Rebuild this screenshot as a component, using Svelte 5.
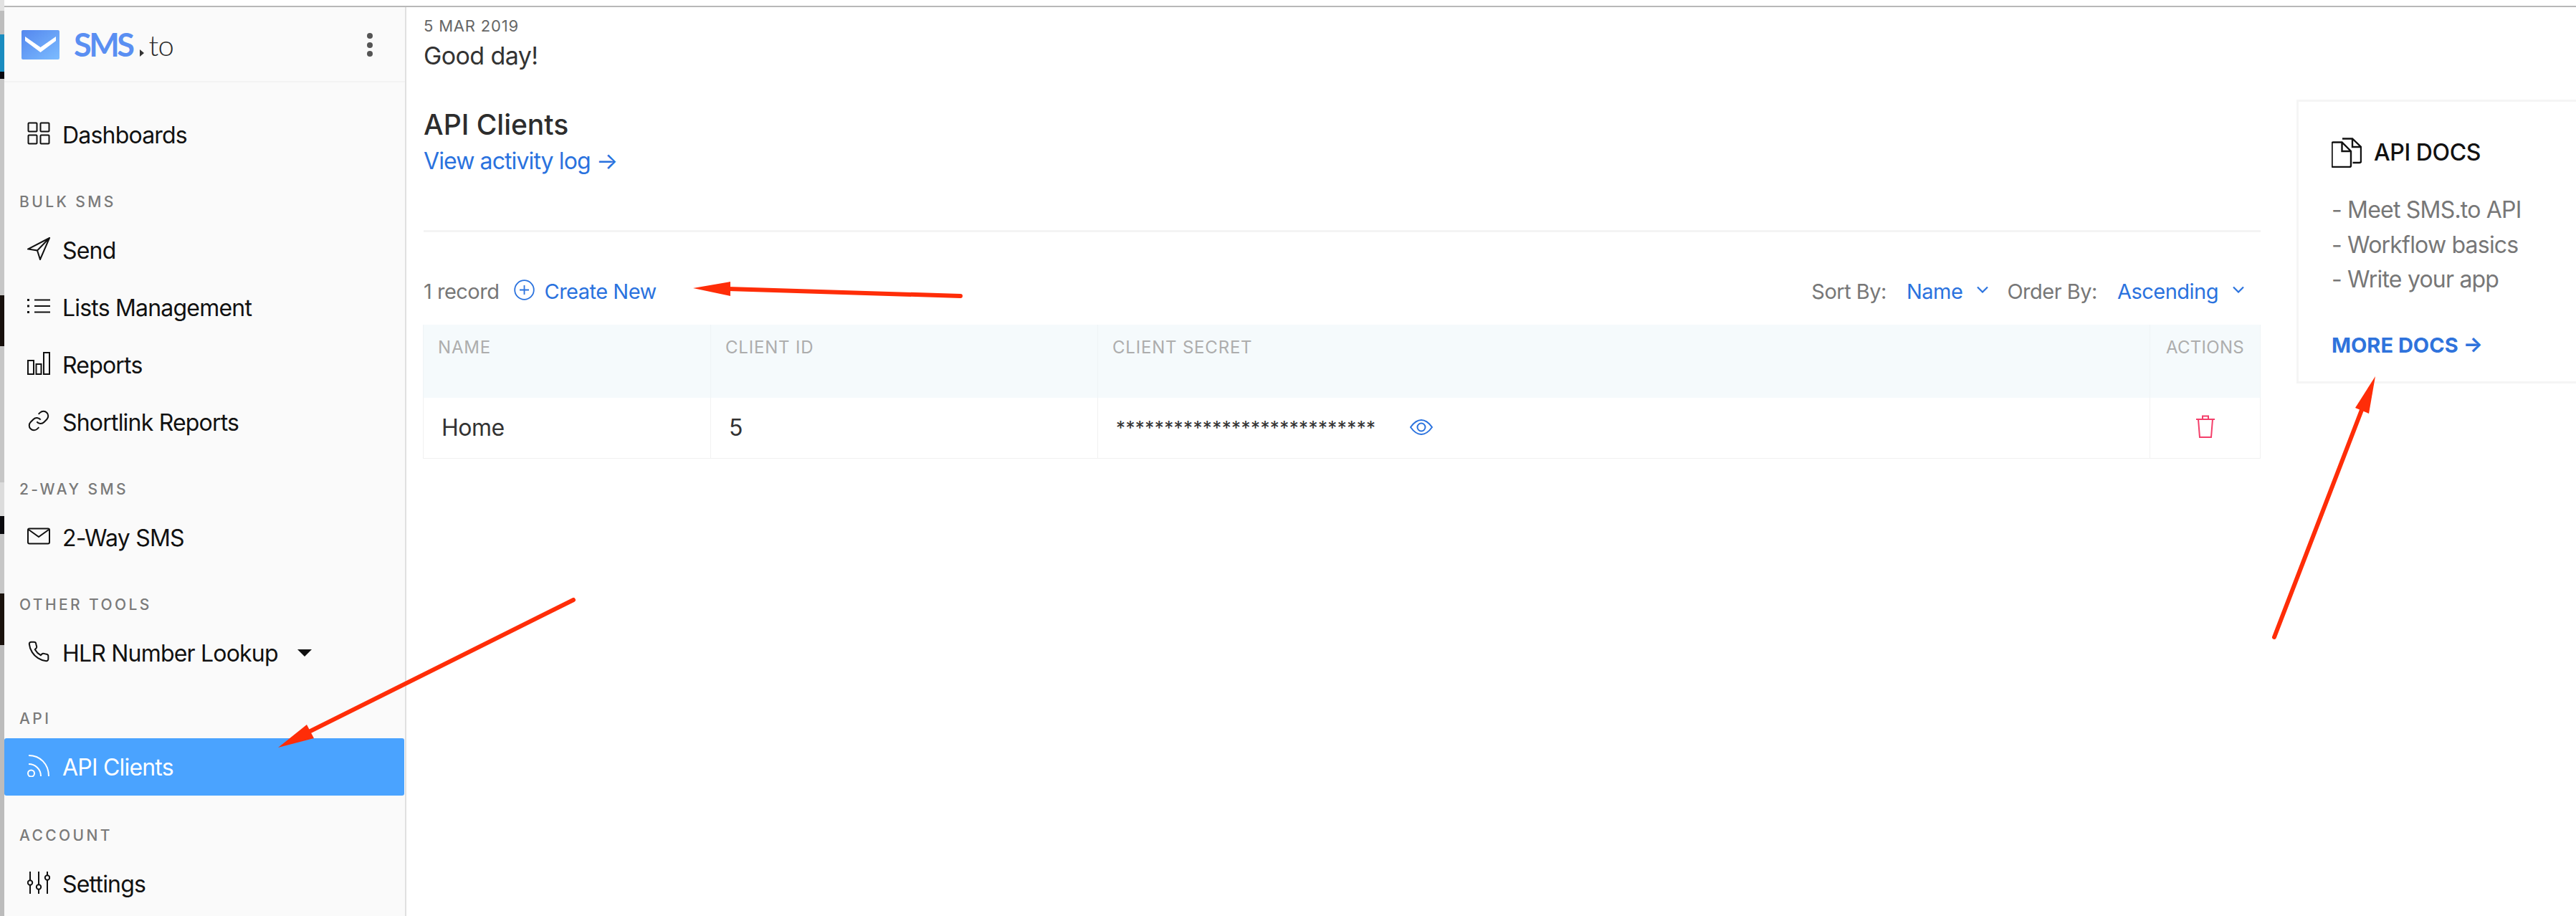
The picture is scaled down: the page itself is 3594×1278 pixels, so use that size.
<script>
  // slice of the desktop that shows at the left edge of the window
  const strip = [
    [15, '#e2e2e2'], [33, '#bdbdbd'], [52, '#1a8cc0'], [10, '#08080f'],
    [302, '#c6c6c6'], [71, '#17100c'], [190, '#c6c6c6'], [47, '#dcdcdc'],
    [25, '#0a0a0e'], [83, '#c6c6c6'], [72, '#1a120c'], [378, '#bcbcbc']
  ];
  const secret = '*'.repeat(27);
</script>

<div class="page">
  <div class="strip">
    {#each strip as [h, bg]}
      <div style="height:{h}px;background:{bg}"></div>
    {/each}
  </div>

  <div class="window">
    <div class="topbar"></div>
    <div class="body">
      <nav class="sidebar">
        <div class="brand">
          <svg class="logo" viewBox="0 0 53 41" width="53" height="41">
            <defs>
              <linearGradient id="lg" x1="0" y1="0" x2="1" y2="1">
                <stop offset="0" stop-color="#5487ee" />
                <stop offset="1" stop-color="#7cbcff" />
              </linearGradient>
            </defs>
            <rect width="53" height="41" rx="2" fill="url(#lg)" />
            <path d="M5 9 L26.500 24 L48 9 V15 L26.500 31 L5 15 Z" fill="#fff" />
          </svg>
          <span class="sms">SMS</span>
          <span class="dot"></span>
          <span class="to">to</span>
          <span class="kebab"><i></i><i></i><i></i></span>
        </div>

        <a class="item first">
          <svg viewBox="0 0 32 32"><rect x="1.500" y="1.500" width="12" height="12" rx="1" /><rect x="18.500" y="1.500" width="12" height="12" rx="1" /><rect x="1.500" y="18.500" width="12" height="12" rx="1" /><rect x="18.500" y="18.500" width="12" height="12" rx="1" /></svg>
          Dashboards
        </a>

        <div class="label">BULK SMS</div>
        <a class="item">
          <svg viewBox="0 0 32 32"><path d="M31 1 L1 16.500 L14 18.500 L18 31 Z M14 18.500 L31 1" /></svg>
          Send
        </a>
        <a class="item">
          <svg viewBox="0 0 32 32"><path d="M10 7.500 H32 M10 16 H32 M10 24.500 H32" /><path class="thick" d="M0 7.500 H3 M0 16 H3 M0 24.500 H3" /></svg>
          Lists Management
        </a>
        <a class="item">
          <svg viewBox="0 0 32 32"><rect x="1" y="12" width="8" height="19" /><rect x="12.500" y="17" width="7" height="14" /><rect x="23" y="1" width="8" height="30" /></svg>
          Reports
        </a>
        <a class="item">
          <svg viewBox="0 0 24 24" class="fine"><path d="M10 13a5 5 0 0 0 7.540.54l3-3a5 5 0 0 0-7.070-7.070l-1.720 1.710" /><path d="M14 11a5 5 0 0 0-7.540-.54l-3 3a5 5 0 0 0 7.070 7.070l1.710-1.710" /></svg>
          Shortlink Reports
        </a>

        <div class="label">2-WAY SMS</div>
        <a class="item">
          <svg viewBox="0 0 32 32"><rect x="1" y="5.500" width="30" height="21" rx="2" /><path d="M2 7 L16 17 L30 7" /></svg>
          2-Way SMS
        </a>

        <div class="label">OTHER TOOLS</div>
        <a class="item">
          <svg viewBox="0 0 24 24" class="fine"><path d="M22 16.920v3a2 2 0 0 1-2.180 2 19.790 19.790 0 0 1-8.630-3.070 19.500 19.500 0 0 1-6-6 19.790 19.790 0 0 1-3.070-8.670A2 2 0 0 1 4.110 2h3a2 2 0 0 1 2 1.720 12.840 12.840 0 0 0 .7 2.810 2 2 0 0 1-.45 2.110L8.090 9.910a16 16 0 0 0 6 6l1.270-1.270a2 2 0 0 1 2.110-.45 12.840 12.840 0 0 0 2.810.7A2 2 0 0 1 22 16.920z" /></svg>
          HLR Number Lookup
          <span class="caret"></span>
        </a>

        <div class="label tight">API</div>
        <a class="item active">
          <svg viewBox="0 0 32 32"><circle cx="5.500" cy="27" r="4.500" /><path d="M2 14 C11 14 19 21 19 31 M2 2 C18 2 30 14 30 31" /></svg>
          API Clients
        </a>

        <div class="label last">ACCOUNT</div>
        <a class="item">
          <svg viewBox="0 0 32 32"><path d="M4 1 V13 M4 20 V32 M16 1 V19 M16 26 V32 M28 1 V6 M28 13 V32" /><circle cx="4" cy="16.500" r="3.200" /><circle cx="16" cy="22.500" r="3.200" /><circle cx="28" cy="9.500" r="3.200" /></svg>
          Settings
        </a>
      </nav>

      <main class="main">
        <section class="content">
          <div class="date">5 MAR 2019</div>
          <div class="greeting">Good day!</div>
          <h1>API Clients</h1>
          <a class="log">View activity log →</a>
          <div class="divider"></div>

          <div class="toolbar">
            <span class="muted">1 record</span>
            <svg class="plus" viewBox="0 0 29 29"><circle cx="14.500" cy="14.500" r="13.300" /><path d="M14.500 8 V21 M8 14.500 H21" /></svg>
            <a class="blue create">Create New</a>
            <span class="spacer"></span>
            <span class="muted">Sort By:</span>
            <a class="blue pick">Name</a>
            <svg class="chev" viewBox="0 0 16 10"><path d="M1 1.500 L8 8.500 L15 1.500" /></svg>
            <span class="muted order">Order By:</span>
            <a class="blue pick">Ascending</a>
            <svg class="chev" viewBox="0 0 16 10"><path d="M1 1.500 L8 8.500 L15 1.500" /></svg>
          </div>

          <table>
            <colgroup>
              <col style="width:401px" /><col style="width:540px" /><col style="width:1468px" /><col style="width:154px" />
            </colgroup>
            <thead>
              <tr>
                <th>NAME</th>
                <th>CLIENT ID</th>
                <th>CLIENT SECRET</th>
                <th class="center">ACTIONS</th>
              </tr>
            </thead>
            <tbody>
              <tr>
                <td>Home</td>
                <td>5</td>
                <td>
                  <div class="secret">
                    <span class="stars">{secret}</span>
                    <svg class="eye" viewBox="0 0 32 22"><path d="M1 11 C6 4 11 1 16 1 C21 1 26 4 31 11 C26 18 21 21 16 21 C11 21 6 18 1 11 Z" /><circle cx="16" cy="11" r="5.500" /></svg>
                  </div>
                </td>
                <td class="center">
                  <svg class="trash" viewBox="0 0 26 32"><path d="M0 6 H26 M9 6 V1.500 H17 V6 M3 6 L5 31 H21 L23 6" /></svg>
                </td>
              </tr>
            </tbody>
          </table>
        </section>

        <aside class="docs">
          <div class="docs-title">
            <svg viewBox="0 0 42 42"><path d="M2 6.500 H14.500 L27 19 V39 a2 2 0 0 1-2 2 H2 a1.500 1.500 0 0 1-1.500-1.500 V8 a1.500 1.500 0 0 1 1.500-1.500 Z M14.500 6.500 V19 H27" /><path d="M15 1.500 H29 L41 13 V33 a2 2 0 0 1-2 2 H29.500 M29 1.500 V13 H41" /></svg>
            API DOCS
          </div>
          <ul>
            <li>- Meet SMS.to API</li>
            <li>- Workflow basics</li>
            <li>- Write your app</li>
          </ul>
          <a class="more">MORE DOCS →</a>
        </aside>
      </main>
    </div>
  </div>

  <!-- red annotations drawn on top of the screenshot -->
  <svg class="notes" viewBox="0 0 3594 1278" width="3594" height="1278">
    <path d="M1340 413 L1015 403" />
    <polygon points="967,402 1019,393 1019,413" />
    <path d="M800 837 L425 1024" />
    <polygon points="388,1043 428,1011 438,1030" />
    <path d="M3173 889 L3295 572" />
    <polygon points="3314,525 3286,569 3305,577" />
  </svg>
</div>

<style>
  :global(body) {
    margin: 0;
    background: #fff;
    overflow: hidden;
  }

  .page {
    position: relative;
    display: flex;
    width: 3594px;
    height: 1278px;
    overflow: hidden;
    font-family: Inter, "Liberation Sans", sans-serif;
    color: #111;
  }

  .strip {
    width: 6px;
    flex: none;
  }

  .window {
    flex: 1;
    min-width: 0;
  }

  .topbar {
    height: 8px;
    border-bottom: 2px solid #b8b8b8;
  }

  .body {
    display: flex;
    height: 1268px;
  }

  /* sidebar */
  .sidebar {
    width: 559px;
    flex: none;
    background: #fafafa;
    border-right: 2px solid #e0e0e0;
  }

  .brand {
    display: flex;
    align-items: flex-start;
    height: 103px;
    padding: 0 0 0 24px;
    border-bottom: 2px solid #f3f3f3;
    position: relative;
  }

  .logo {
    margin-top: 32px;
    flex: none;
  }

  .sms {
    margin: 24px 0 0 20px;
    font-family: Lato, sans-serif;
    font-weight: 700;
    font-size: 45px;
    line-height: 56px;
    letter-spacing: -3.500px;
    color: #5a8ff2;
  }

  .dot {
    margin: 59px 0 0 11px;
    border-left: 6px solid #333;
    border-top: 5px solid transparent;
    border-bottom: 5px solid transparent;
  }

  .to {
    margin: 25px 0 0 6px;
    font-family: Lato, sans-serif;
    font-weight: 300;
    font-size: 40px;
    line-height: 56px;
    letter-spacing: -0.500px;
    color: #2b2b2b;
  }

  .kebab {
    position: absolute;
    left: 506px;
    top: 36px;
    display: flex;
    flex-direction: column;
    gap: 4.500px;
  }

  .kebab i {
    width: 8px;
    height: 8px;
    border-radius: 50%;
    background: #555;
  }

  .item {
    display: flex;
    align-items: center;
    gap: 17px;
    height: 80px;
    padding-left: 32px;
    font-size: 32px;
    letter-spacing: -0.800px;
    color: #111;
  }

  .item.first {
    margin-top: 33px;
  }

  .item svg {
    width: 32px;
    height: 32px;
    flex: none;
    margin-top: -5px;
    fill: none;
    stroke: #111;
    stroke-width: 2;
  }

  .item svg.fine {
    stroke-width: 1.500;
  }

  .item svg .thick {
    stroke-width: 3;
  }

  .item.active {
    background: #4aa3ff;
    color: #fff;
    border-radius: 3px;
    margin-right: 1px;
  }

  .item.active svg {
    stroke: #fff;
  }

  .caret {
    width: 0;
    height: 0;
    margin-left: 10px;
    border-left: 10px solid transparent;
    border-right: 10px solid transparent;
    border-top: 10px solid #111;
  }

  .label {
    margin-top: 27px;
    height: 54px;
    line-height: 54px;
    padding-left: 21px;
    font-size: 21px;
    font-weight: 500;
    letter-spacing: 3.400px;
    color: #7a7a7a;
  }

  .label.tight {
    margin-top: 25px;
  }

  .label.last {
    margin-top: 29px;
  }

  /* main column */
  .main {
    flex: 1;
    display: flex;
    gap: 50px;
    min-width: 0;
    padding-left: 24px;
  }

  .content {
    width: 2563px;
    flex: none;
    padding-top: 10px;
  }

  .date {
    font-size: 22px;
    line-height: 32px;
    font-weight: 400;
    letter-spacing: 0.800px;
    color: #666;
  }

  .greeting {
    font-size: 34px;
    line-height: 44px;
    margin-top: 4px;
    letter-spacing: -0.600px;
    color: #333;
  }

  h1 {
    margin: 46px 0 0;
    font-size: 39px;
    line-height: 56px;
    font-weight: 500;
    color: #2d2d2d;
  }

  .log {
    display: block;
    margin-top: 1px;
    font-size: 32px;
    line-height: 44px;
    letter-spacing: -0.900px;
    color: #2a72de;
  }

  .divider {
    margin-top: 74px;
    height: 3px;
    background: #f4f4f4;
  }

  .toolbar {
    display: flex;
    align-items: center;
    height: 60px;
    margin-top: 52px;
    padding-right: 23px;
    font-size: 29px;
    letter-spacing: -0.500px;
  }

  .muted {
    color: #777;
  }

  .blue {
    color: #2a72de;
  }

  .plus {
    width: 29px;
    height: 29px;
    margin: -4px 0 0 21px;
    fill: none;
    stroke: #2a72de;
    stroke-width: 1.800;
  }

  .create {
    margin-left: 13px;
  }

  .spacer {
    flex: 1;
  }

  .pick {
    margin-left: 28px;
  }

  .chev {
    width: 16px;
    height: 10px;
    margin: -4px 0 0 20px;
    fill: none;
    stroke: #2a72de;
    stroke-width: 2.200;
  }

  .order {
    margin-left: 26px;
  }

  table {
    width: 2563px;
    margin: 17px 0 0 -1px;
    border-collapse: collapse;
    table-layout: fixed;
  }

  th {
    height: 102px;
    box-sizing: border-box;
    padding: 18px 0 0 20px;
    vertical-align: top;
    text-align: left;
    font-size: 24px;
    line-height: 28px;
    font-weight: 400;
    letter-spacing: 0.800px;
    color: #adadad;
    background: #f5fafc;
    border-left: 1px solid #eff4f6;
    border-right: 1px solid #eff4f6;
  }

  td {
    height: 84px;
    box-sizing: border-box;
    padding: 0 0 0 25px;
    font-size: 32px;
    letter-spacing: -0.500px;
    color: #333;
    border: 1px solid #f1f1f1;
    border-top: none;
  }

  th.center,
  td.center {
    padding: 0;
    text-align: center;
  }

  th.center {
    padding-top: 18px;
    letter-spacing: 0.300px;
  }

  .secret {
    display: flex;
    align-items: center;
  }

  .stars {
    font-size: 26px;
    letter-spacing: 0.400px;
    width: 410px;
  }

  .eye {
    width: 32px;
    height: 22px;
    margin-top: -2px;
    fill: none;
    stroke: #2a72de;
    stroke-width: 2;
  }

  .trash {
    width: 26px;
    height: 32px;
    display: block;
    margin: -4px auto 0;
    fill: none;
    stroke: #f43f6a;
    stroke-width: 2;
  }

  /* API docs card, cut off by the window edge */
  .docs {
    width: 440px;
    height: 396px;
    flex: none;
    box-sizing: border-box;
    margin-top: 129px;
    padding: 50px 0 0 46px;
    border: 3px solid #f5f5f5;
  }

  .docs-title {
    display: flex;
    align-items: center;
    gap: 17px;
    font-size: 32px;
    font-weight: 500;
    line-height: 42px;
    letter-spacing: -0.400px;
    color: #111;
  }

  .docs-title svg {
    width: 42px;
    height: 42px;
    fill: none;
    stroke: #111;
    stroke-width: 2.400;
  }

  ul {
    list-style: none;
    margin: 35px 0 0;
    padding: 0;
    font-size: 32px;
    line-height: 48.500px;
    letter-spacing: -0.800px;
    color: #777;
  }

  .more {
    display: block;
    margin-top: 47px;
    font-size: 29px;
    line-height: 40px;
    font-weight: 700;
    color: #2f73dc;
  }

  /* annotations */
  .notes {
    position: absolute;
    left: 0;
    top: 0;
    pointer-events: none;
  }

  .notes path {
    fill: none;
    stroke: #ff2d08;
    stroke-width: 6;
    stroke-linecap: round;
  }

  .notes polygon {
    fill: #ff2d08;
  }
</style>
